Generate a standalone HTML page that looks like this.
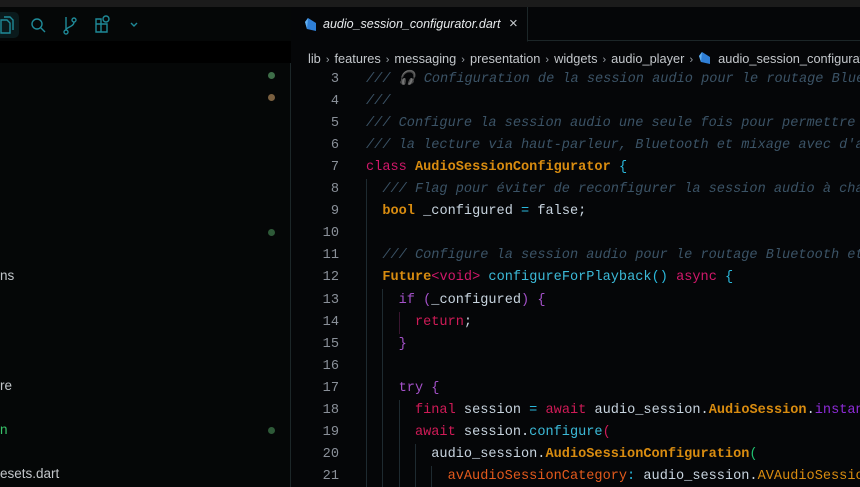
<!DOCTYPE html><html><head><meta charset="utf-8"><style>
*{margin:0;padding:0;box-sizing:border-box}
body{width:860px;height:487px;background:#050608;overflow:hidden;position:relative;font-family:"Liberation Sans",sans-serif}
.top{position:absolute;left:0;top:0;width:860px;height:7px;background:#1b1b1b}
.side{position:absolute;left:0;top:7px;width:291px;height:480px;background:#050707;border-right:1px solid #1c2628}
.sbar{position:absolute;left:0;top:7px;width:291px;height:56px;background:#050707}
.sblack{position:absolute;left:0;top:41px;width:291px;height:22px;background:#000}
.dot{position:absolute;width:7px;height:7px;border-radius:50%}
.st{position:absolute;left:0;font-size:13.5px;color:#c2c6ca}
.tabbar{position:absolute;left:292px;top:7px;width:568px;height:34px;background:#050608;border-bottom:1px solid #1c2628}
.tab{position:absolute;left:292px;top:7px;width:236px;height:35px;background:#050608;border-right:1px solid #1c2628;border-bottom:1px solid #050608}
.tab span{position:absolute;left:31px;top:10px;font-style:italic;font-size:12.5px;color:#e6e9ec;white-space:nowrap}
.bc{position:absolute;left:308px;top:51px;font-size:12.8px;color:#c3c7cb;white-space:nowrap}
.bc i{font-style:normal;color:#9aa0a6;margin:0 5px;font-size:11px}
.ln{position:absolute;left:300px;width:39px;text-align:right;font-family:"Liberation Mono",monospace;font-size:13.6px;color:#8a9099;line-height:22px}
#code{position:absolute;left:0;top:0;width:860px;height:487px;overflow:hidden}
.cl{position:absolute;left:366px;font-family:"Liberation Mono",monospace;font-size:13.6px;line-height:22px;color:#c8d4df;white-space:pre}
.c{color:#3b5366;font-style:italic}.k{color:#d1186a}.t{color:#d98c10;font-weight:bold}.b{color:#2ab8dc}.f{color:#3cbad8}.p{color:#a451c9}.r{color:#cf1b57}.o{color:#e35a1c}.g{color:#20c070}.v{color:#8e2bd8}
.guide{position:absolute;width:1px;background:#1e2a30}
</style></head><body>
<div class="top"></div>
<div class="side"></div>
<div class="sbar"></div>
<div class="sblack"></div>
<div style="position:absolute;left:-5px;top:12px;width:24px;height:26px;background:#0a1a1c;border-radius:5px"></div>
<svg style="position:absolute;left:0;top:14px" width="145" height="22" fill="none" stroke="#1f8a98" stroke-width="1.4">
<path d="M1 6h6l3 3v10H1z M4 3h6l3 3v10"/>
<circle cx="37" cy="10" r="5"/><path d="M41 14l4 4"/>
<circle cx="66" cy="18" r="2"/><circle cx="74" cy="6" r="2"/><path d="M66 3v13 M74 8c0 5-8 5-8 8"/>
<path d="M96 5h5v5h-5z M96 10h5v8h-5z M101 10h6v8h-6z"/><circle cx="106" cy="5" r="3"/>
<path d="M131 9l3 3 3-3"/></svg>
<div class="dot" style="left:268px;top:72px;background:#3e6e48"></div>
<div class="dot" style="left:268px;top:94px;background:#7a6040"></div>
<div class="dot" style="left:268px;top:229px;background:#2e5a38"></div>
<div class="dot" style="left:268px;top:427px;background:#2e5a38"></div>
<div class="st" style="top:268px">ns</div>
<div class="st" style="top:378px">re</div>
<div class="st" style="top:422px;color:#38c46a">n</div>
<div class="st" style="top:466px">esets.dart</div>
<div class="tabbar"></div>
<div class="tab"><svg style="position:absolute;left:12px;top:10px" width="14" height="15"><path d="M4 1L12 6V14L3 12L1 5Z" fill="#2f7fd6"/><path d="M4 1L1 5L3 12" fill="#62b0f0"/></svg><span>audio_session_configurator.dart</span><span style="left:217px;top:8px;font-style:normal;font-size:15px;color:#c8ccd0">×</span></div>
<div class="bc">lib<i>›</i>features<i>›</i>messaging<i>›</i>presentation<i>›</i>widgets<i>›</i>audio_player<i>›</i><svg width="14" height="14" style="vertical-align:-2px;margin-right:6px"><path d="M4 1L12 6V13L3 11L1 5Z" fill="#2f7fd6"/><path d="M4 1L1 5L3 11" fill="#62b0f0"/></svg>audio_session_configurator.dart</div>
<div class="guide" style="left:366px;top:179px;height:308px"></div>
<div class="guide" style="left:382px;top:289px;height:198px"></div>
<div class="guide" style="left:399px;top:312px;height:22px;background:#3a1530"></div>
<div class="guide" style="left:399px;top:400px;height:87px"></div>
<div class="guide" style="left:415px;top:444px;height:43px"></div>
<div class="guide" style="left:431px;top:466px;height:21px"></div>
<div id="code"></div>
<script>
const L=[
[3,'<span class="c">/// 🎧 Configuration de la session audio pour le routage Bluetooth</span>'],
[4,'<span class="c">///</span>'],
[5,'<span class="c">/// Configure la session audio une seule fois pour permettre</span>'],
[6,'<span class="c">/// la lecture via haut-parleur, Bluetooth et mixage avec d\'autres</span>'],
[7,'<span class="k">class</span> <span class="t">AudioSessionConfigurator</span> <span class="b">{</span>'],
[8,'  <span class="c">/// Flag pour éviter de reconfigurer la session audio à chaque</span>'],
[9,'  <span class="t">bool</span> _configured <span class="b">=</span> false;'],
[10,''],
[11,'  <span class="c">/// Configure la session audio pour le routage Bluetooth et</span>'],
[12,'  <span class="t">Future</span><span class="k">&lt;void&gt;</span> <span class="f">configureForPlayback</span><span class="b">()</span> <span class="k">async</span> <span class="b">{</span>'],
[13,'    <span class="p">if (</span>_configured<span class="p">) {</span>'],
[14,'      <span class="r">return</span>;'],
[15,'    <span class="p">}</span>'],
[16,''],
[17,'    <span class="p">try {</span>'],
[18,'      <span class="r">final</span> session <span class="b">=</span> <span class="r">await</span> audio_session.<span class="t">AudioSession</span>.<span class="v">instance</span>;'],
[19,'      <span class="r">await</span> session.<span class="f">configure</span><span class="r">(</span>'],
[20,'        audio_session.<span class="t">AudioSessionConfiguration</span><span class="g">(</span>'],
[21,'          <span class="o">avAudioSessionCategory</span><span class="b">:</span> audio_session.<span class="t" style="font-weight:normal">AVAudioSessionCategory</span>']];
let h='';L.forEach((x,i)=>{const t=69+i*22.05;h+=`<div class="ln" style="top:${t}px">${x[0]}</div><div class="cl" style="top:${t}px">${x[1]}</div>`});
document.getElementById('code').innerHTML=h;
</script>
</body></html>
